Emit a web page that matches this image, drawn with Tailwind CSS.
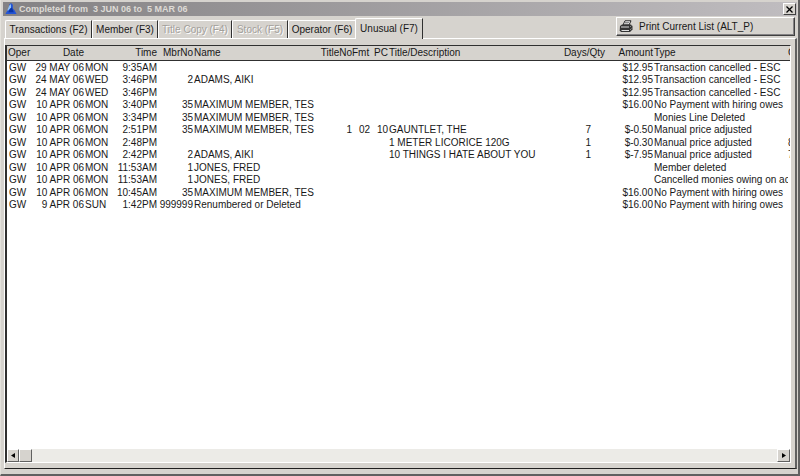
<!DOCTYPE html>
<html lang="en">
<head>
<meta charset="utf-8">
<title>Completed from 3 JUN 06 to 5 MAR 06</title>
<script src="https://cdn.jsdelivr.net/npm/@tailwindcss/browser@4"></script>
</head>
<body class="h-screen overflow-hidden bg-[#d6d3ce] font-['Liberation_Sans',Arial,sans-serif] text-[10px] leading-3 text-[#181818]">
<main class="flex h-full flex-col border-r-2 border-b-2 border-l border-l-[#e4e2dc] border-r-[#606060] border-b-[#606060] pt-[2px] pr-px pb-[5px] pl-px">
  <header class="ml-px flex h-[14px] shrink-0 items-center bg-linear-to-r from-[#848284] to-[#c0bdc0] pr-px pl-[2px]">
    <svg class="h-[12px] w-[12px]" viewBox="0 0 12 13" aria-hidden="true"><path d="M0 12 2 8 4 6V2L6 0 8 2V6L10 8 12 12Z" fill="#2455d6"/><path d="M5 6 3 10H9L7 5Z" fill="#0b36a8"/><path d="M4 3 6 1V5L3 8H2Z" fill="#8fc0f5"/></svg>
    <h1 class="ml-[2px] flex-1 text-[9px] font-bold whitespace-pre text-[#dedbd6]">Completed from  3 JUN 06 to  5 MAR 06</h1>
    <button aria-label="Close" class="flex h-[12px] w-[13px] items-center justify-center border border-t-white border-l-white border-r-[#404040] border-b-[#404040] bg-[#d6d3ce]"><svg class="size-[7px]" viewBox="0 0 7 7" aria-hidden="true"><path d="M.5.5 6.5 6.5M6.5.5.5 6.5" stroke="#000" stroke-width="1.3"/></svg></button>
  </header>
  <div class="flex h-[22px] shrink-0 items-end justify-between pr-[2px] pl-[3px]">
    <div class="relative z-10 flex items-end" role="tablist">
      <button role="tab" aria-selected="false" class="h-[18px] w-[87px] rounded-tl-xs border-t border-r border-l border-t-white border-l-white border-r-[#303030] whitespace-nowrap">Transactions (F2)</button>
      <button role="tab" aria-selected="false" class="h-[18px] w-[66px] rounded-tl-xs border-t border-r border-l border-t-white border-l-white border-r-[#303030] whitespace-nowrap">Member (F3)</button>
      <button role="tab" aria-selected="false" disabled class="h-[18px] w-[74px] rounded-tl-xs border-t border-r border-l border-t-white border-l-white border-r-[#303030] whitespace-nowrap text-[#a3a09b] [text-shadow:1px_1px_0_white]">Title Copy (F4)</button>
      <button role="tab" aria-selected="false" disabled class="h-[18px] w-[56px] rounded-tl-xs border-t border-r border-l border-t-white border-l-white border-r-[#303030] whitespace-nowrap text-[#a3a09b] [text-shadow:1px_1px_0_white]">Stock (F5)</button>
      <button role="tab" aria-selected="false" class="h-[18px] w-[67px] rounded-tl-xs border-t border-l border-t-white border-l-white whitespace-nowrap">Operator (F6)</button>
      <button role="tab" aria-selected="true" class="-mb-px h-[21px] w-[68px] rounded-tl-xs border-t border-r border-l border-t-white border-l-white border-r-[#303030] bg-[#d6d3ce] whitespace-nowrap">Unusual (F7)</button>
    </div>
    <button class="mb-[2px] flex h-[19px] w-[179px] items-center border border-t-white border-l-white border-r-[#404040] border-b-[#404040] pl-[2px] whitespace-nowrap shadow-[inset_-1px_-1px_0_#848284]">
      <svg class="h-[13px] w-[14px]" viewBox="0 0 14 13" aria-hidden="true"><path d="M4 5 6 .8H12L10 5Z" fill="#fff" stroke="#222"/><path d="M6 2.5H10M5.500 4H9.500" stroke="#555" stroke-width=".7"/><path d="M1 6 3 4.500H12L13.500 6V9.500L11 12H2L.7 10.500Z" fill="#333"/><path d="M2 7H10M2.500 10.500H10" stroke="#ddd"/><path d="M11 7 12.500 5.500M11 10 12.500 8.500" stroke="#aaa" stroke-width=".7"/></svg>
      <span class="ml-[6px]">Print Current List (ALT_P)</span>
    </button>
  </div>
  <section class="ml-[2px] flex min-h-0 flex-1 flex-col border-t border-r-2 border-b border-l border-t-white border-r-[#606060] border-b-[#202020] border-l-white pt-[6px] pr-[4px] pb-[5px]" role="tabpanel">
    <div class="flex min-h-0 flex-1 flex-col border-t border-r border-b border-l-2 border-t-[#303030] border-r-white border-b-white border-l-[#303030] bg-white">
      <div class="min-h-0 flex-1 overflow-hidden">
        <table class="w-[840px] table-fixed border-separate border-spacing-0 text-left whitespace-nowrap [&_td]:p-0 [&_th]:h-[15px] [&_th]:border-b [&_th]:border-[#303030] [&_th]:p-0 [&_th]:font-normal">
          <colgroup><col class="w-[24px]"><col class="w-[53px]"><col class="w-[28px]"><col class="w-[45px]"><col class="w-[36px]"><col class="w-[127px]"><col class="w-[32px]"><col class="w-[19px]"><col class="w-[17px]"><col class="w-[172px]"><col class="w-[45px]"><col class="w-[48px]"><col class="w-[135px]"><col></colgroup>
          <thead><tr class="bg-[#d6d3ce]"><th class="pl-px!">Oper</th><th class="text-right">Date</th><th></th><th class="text-right">Time</th><th class="text-right">MbrNo</th><th class="pl-px!">Name</th><th class="text-right">TitleNo</th><th>Fmt</th><th class="text-right">PC</th><th class="pl-px!">Title/Description</th><th class="text-right">Days/Qty</th><th class="text-right">Amount</th><th class="pl-px!">Type</th><th>Cost</th></tr></thead>
          <tbody id="rows"></tbody>
        </table>
      </div>
      <div class="flex h-[13px] shrink-0 items-stretch bg-[#ecebe7]" role="group" aria-label="Horizontal scroll">
        <button aria-label="Scroll left" class="flex w-[12px] items-center justify-center border border-t-white border-l-white border-r-[#606060] border-b-[#606060] bg-[#d6d3ce]"><svg class="h-[5px] w-[4px]" viewBox="0 0 4 5" aria-hidden="true"><path d="M4 0V5L0 2.500Z"/></svg></button>
        <button aria-label="Scroll position" class="w-[13px] border border-t-white border-l-white border-r-[#606060] border-b-[#606060] bg-[#d6d3ce]"></button>
        <div class="flex-1"></div>
        <button aria-label="Scroll right" class="flex w-[13px] items-center justify-center border border-t-white border-l-white border-r-[#606060] border-b-[#606060] bg-[#d6d3ce]"><svg class="h-[5px] w-[4px]" viewBox="0 0 4 5" aria-hidden="true"><path d="M0 0V5L4 2.500Z"/></svg></button>
      </div>
    </div>
  </section>
</main>
<script>
const rows = [
  ['29 MAY 06','MON','9:35AM','','','','','','','','$12.95','Transaction cancelled - ESC',''],
  ['24 MAY 06','WED','3:46PM','2','ADAMS, AIKI','','','','','','$12.95','Transaction cancelled - ESC',''],
  ['24 MAY 06','WED','3:46PM','','','','','','','','$12.95','Transaction cancelled - ESC',''],
  ['10 APR 06','MON','3:40PM','35','MAXIMUM MEMBER, TES','','','','','','$16.00','No Payment with hiring owes',''],
  ['10 APR 06','MON','3:34PM','35','MAXIMUM MEMBER, TES','','','','','','','Monies Line Deleted',''],
  ['10 APR 06','MON','2:51PM','35','MAXIMUM MEMBER, TES','1','02','10','GAUNTLET, THE','7','$-0.50','Manual price adjusted',''],
  ['10 APR 06','MON','2:48PM','','','','','','1 METER LICORICE 120G','1','$-0.30','Manual price adjusted','8'],
  ['10 APR 06','MON','2:42PM','2','ADAMS, AIKI','','','','10 THINGS I HATE ABOUT YOU','1','$-7.95','Manual price adjusted','7'],
  ['10 APR 06','MON','11:53AM','1','JONES, FRED','','','','','','','Member deleted',''],
  ['10 APR 06','MON','11:53AM','1','JONES, FRED','','','','','','','Cancelled monies owing on ac',''],
  ['10 APR 06','MON','10:45AM','35','MAXIMUM MEMBER, TES','','','','','','$16.00','No Payment with hiring owes',''],
  ['9 APR 06','SUN','1:42PM','999999','Renumbered or Deleted','','','','','','$16.00','No Payment with hiring owes','']
];
const align = ['text-right','pl-px!','text-right','text-right','pl-px!','text-right','text-right pr-px!','text-right','pl-px!','pr-[14px]! text-right','text-right','overflow-hidden pl-px!',''];
document.getElementById('rows').innerHTML = rows.map(r =>
  '<tr class="h-[12px] odd:h-[13px]"><td class="pl-[2px]!">GW</td>' + r.map((v, i) => `<td class="${align[i]}">${v}</td>`).join('') + '</tr>').join('');
</script>
</body>
</html>
